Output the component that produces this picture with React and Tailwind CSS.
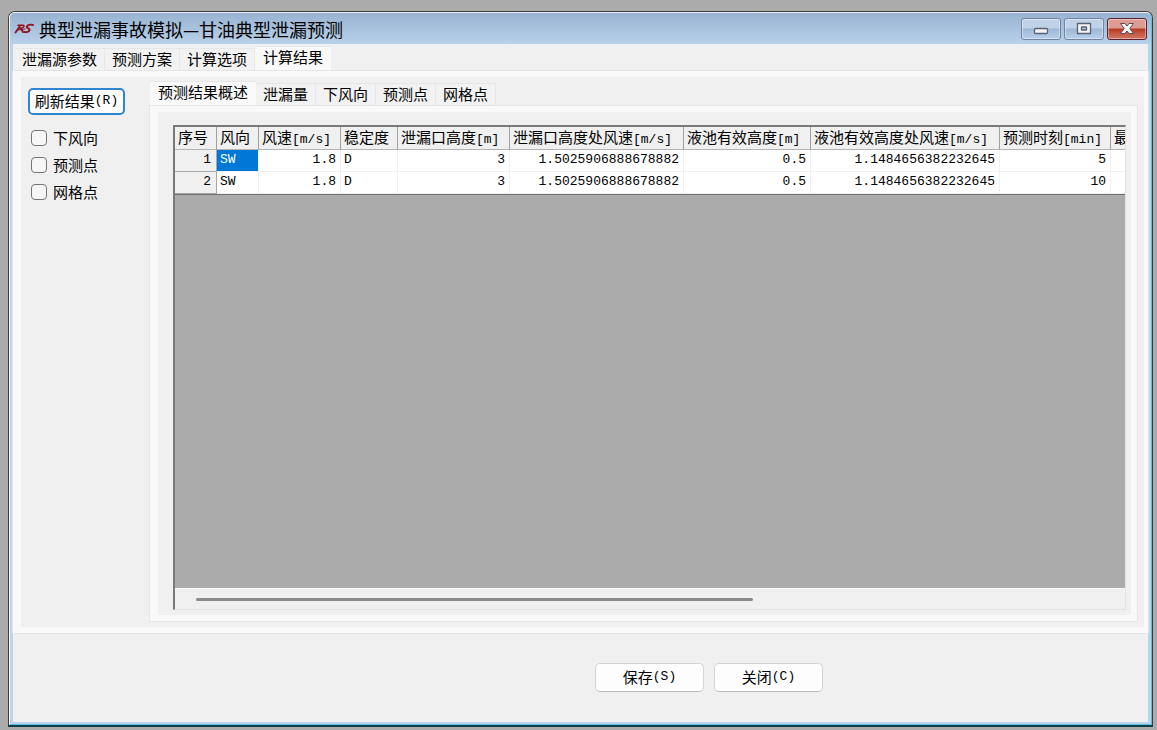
import React, { useState } from 'react';

const MAIN_TABS = ['泄漏源参数', '预测方案', '计算选项', '计算结果'];
const RESULT_TABS = ['预测结果概述', '泄漏量', '下风向', '预测点', '网格点'];
const FILTERS = ['下风向', '预测点', '网格点'];

const COLUMNS = [
    { label: '序号', width: 'w-[42px]' },
    { label: '风向', width: 'w-[42px]' },
    { label: '风速', unit: '[m/s]', width: 'w-[82px]', numeric: true },
    { label: '稳定度', width: 'w-[57px]' },
    { label: '泄漏口高度', unit: '[m]', width: 'w-[112px]', numeric: true },
    { label: '泄漏口高度处风速', unit: '[m/s]', width: 'w-[174px]', numeric: true },
    { label: '液池有效高度', unit: '[m]', width: 'w-[127px]', numeric: true },
    { label: '液池有效高度处风速', unit: '[m/s]', width: 'w-[189px]', numeric: true },
    { label: '预测时刻', unit: '[min]', width: 'w-[111px]', numeric: true },
    { label: '最', width: 'w-[120px]', numeric: true },
];

const ROWS = [
    ['1', 'SW', '1.8', 'D', '3', '1.5025906888678882', '0.5', '1.1484656382232645', '5', ''],
    ['2', 'SW', '1.8', 'D', '3', '1.5025906888678882', '0.5', '1.1484656382232645', '10', ''],
];

const Mono = ({ children }) => (
    <span className="font-['Liberation_Mono',monospace] text-[13px] leading-none">{children}</span>
);

const Logo = () => (
    <svg className="w-5 h-4 shrink-0" viewBox="0 0 20 16" fill="none" stroke="#8f1420" strokeLinecap="round" aria-hidden="true">
        <path d="M4 4.2H9C11 4.4 9.8 7 7 7.4H5" strokeWidth="1.5" />
        <path d="M6 5L1.5 11.5M7 7.5L9 11" strokeWidth="1.9" />
        <path d="M19 4C16.5 3.2 13.2 4 12.8 5.8C12.6 7.4 16 7.4 15.6 9C15.2 10.8 12.5 11.4 10.3 11" strokeWidth="1.9" />
        <path d="M4 9L11 8" strokeWidth="1" />
    </svg>
);

const CaptionButton = ({ label, danger, children }) => (
    <button
        type="button"
        aria-label={label}
        className={`w-10 h-[22px] flex items-center justify-center rounded-[3px] border shadow-[inset_0_0_0_1px_rgba(255,255,255,0.4)] ${
            danger
                ? 'border-[#5a2030] bg-linear-to-b from-[#dc9c90] from-45% via-[#b93a22] via-50% to-[#d07860]'
                : 'border-[#72839f] bg-linear-to-b from-[#bfd2e8] from-45% via-[#9db8d6] via-50% to-[#b7d0ea]'
        }`}
    >
        {children}
    </button>
);

const TitleBar = () => (
    <header className="h-[31px] flex items-center pl-1 pr-1 rounded-t-[5px] bg-linear-to-b from-[#98b3d1] to-[#b9d1ea]">
        <Logo />
        <h1 className="flex-1 pl-[5px] text-[18px] leading-5 whitespace-nowrap">典型泄漏事故模拟—甘油典型泄漏预测</h1>
        <div className="flex gap-[3px]">
            <CaptionButton label="最小化">
                <svg className="w-4 h-4" viewBox="0 0 16 16">
                    <rect x="1.5" y="7.5" width="13" height="5" rx="1" fill="#f4f4f4" stroke="#596273" strokeWidth="1.3" />
                </svg>
            </CaptionButton>
            <CaptionButton label="最大化">
                <svg className="w-4 h-4" viewBox="0 0 16 16">
                    <path
                        fillRule="evenodd"
                        d="M1.5 2.5h13v10h-13zM5.5 6v3h5V6z"
                        fill="#f4f4f4"
                        stroke="#596273"
                        strokeWidth="1.3"
                        strokeLinejoin="round"
                    />
                </svg>
            </CaptionButton>
            <CaptionButton label="关闭窗口" danger>
                <svg className="w-4 h-4" viewBox="0 0 16 16">
                    <path
                        d="M1.5 2.5H6L8 5L10 2.5H14.5L10.8 7.5L14.5 12.5H10L8 10L6 12.5H1.5L5.2 7.5Z"
                        fill="#f4f4f4"
                        stroke="#5e4b57"
                        strokeLinejoin="round"
                    />
                </svg>
            </CaptionButton>
        </div>
    </header>
);

const Tabs = ({ items, active, onChange, label, firstPadding }) => (
    <div role="tablist" aria-label={label} className="flex items-end h-[25px]">
        {items.map((item, index) => {
            const selected = index === active;
            return (
                <button
                    key={item}
                    type="button"
                    role="tab"
                    aria-selected={selected}
                    onClick={() => onChange(index)}
                    className={`text-[15px] leading-5 whitespace-nowrap border-[#e6e6e6] ${
                        selected
                            ? 'h-[25px] pb-1 px-2 bg-[#f9f9f9] border-t'
                            : `h-[23px] pb-[2px] border-t border-r bg-[#f2f2f2] ${index === 0 ? firstPadding : 'px-[7px]'}`
                    }`}
                >
                    {item}
                </button>
            );
        })}
    </div>
);

const ResultGrid = () => (
    <div className="flex-1 flex flex-col min-w-0 overflow-hidden bg-[#ababab] border-t-2 border-l-2 border-[#7a7a7a] border-r border-b border-r-[#e2e2e2] border-b-[#e2e2e2]">
        <div className="flex-1 overflow-hidden">
            <table className="table-fixed w-[1056px] border-separate border-spacing-0 border-b border-[#6f6f6f]">
                <thead>
                    <tr className="h-[23px] bg-[#f0f0f0]">
                        {COLUMNS.map((col) => (
                            <th
                                key={col.label}
                                scope="col"
                                className={`${col.width} p-0 pl-[3px] align-top text-left font-normal text-[15px] leading-5 whitespace-nowrap border-r border-b border-r-[#a0a0a0] border-b-[#b4b4b4]`}
                            >
                                {col.label}
                                {col.unit && <Mono>{col.unit}</Mono>}
                            </th>
                        ))}
                    </tr>
                </thead>
                <tbody className="font-['Liberation_Mono',monospace] text-[13px] leading-5">
                    {ROWS.map((row, rowIndex) => (
                        <tr key={row[0]} className="h-[22px] bg-white">
                            {row.map((value, i) => {
                                if (i === 0) {
                                    return (
                                        <th key={i} scope="row" className="p-0 pr-[5px] text-right font-normal align-top bg-[#f0f0f0] border-r border-b border-[#a8a8a8]">
                                            {value}
                                        </th>
                                    );
                                }
                                const picked = rowIndex === 0 && i === 1;
                                return (
                                    <td
                                        key={i}
                                        className={`p-0 px-[3px] align-top border-r border-b border-[#f0f0f0] ${
                                            COLUMNS[i].numeric ? 'text-right pr-1' : 'text-left'
                                        } ${picked ? 'bg-[#0078d7] text-white' : ''}`}
                                    >
                                        {value}
                                    </td>
                                );
                            })}
                        </tr>
                    ))}
                </tbody>
            </table>
        </div>
        <div className="h-[21px] flex items-center pl-[21px] bg-[#f0f0f0] border-t border-[#fafafa]">
            <div className="w-[60%] h-[3px] rounded-full bg-[#8a8a8a]" />
        </div>
    </div>
);

const Sidebar = () => (
    <aside className="w-[129px] shrink-0 pt-[11px] pl-[7px]">
        <button
            type="button"
            className="w-[97px] h-[27px] flex items-center justify-center pb-[2px] rounded-[5px] border-2 border-[#2f86cf] bg-[#fdfdfd] text-[15px] leading-5 whitespace-nowrap"
        >
            刷新结果<Mono>(R)</Mono>
        </button>
        <div className="flex flex-col gap-[7px] pt-[13px] pl-[3px]">
            {FILTERS.map((name) => (
                <label key={name} className="flex items-center gap-[6px] h-5 text-[15px] leading-5">
                    <input type="checkbox" className="appearance-none w-4 h-4 rounded-[4px] border border-[#757575] bg-[#f6f6f6] checked:bg-[#0078d7]" />
                    {name}
                </label>
            ))}
        </div>
    </aside>
);

const FooterButton = ({ text, hotkey }) => (
    <button
        type="button"
        className="w-[109px] h-[29px] flex items-center justify-center pb-[2px] rounded-[5px] border border-[#d4d4d4] border-b-[#bcbcbc] bg-[#fdfdfd] text-[15px] leading-5"
    >
        {text}
        <Mono>({hotkey})</Mono>
    </button>
);

export default function App() {
    const [mainTab, setMainTab] = useState(3);
    const [resultTab, setResultTab] = useState(0);

    return (
        <div className="min-h-screen flex pt-[11px] pl-2 pr-1 pb-[3px] bg-[#ababab] text-black font-['Noto_Sans_CJK_SC',sans-serif]">
            <div className="flex-1 min-w-0 flex flex-col rounded-t-[7px] border border-[#3c3c3c] border-b-2 border-b-[#123c46] bg-[#bcd3ea]">
                <div className="flex-1 flex flex-col min-w-0 rounded-t-[6px] border border-t-[#e8f1fa] border-l-white border-r-[#4fc3e0] border-b-[#4fc3e0]">
                    <TitleBar />
                    <main className="flex-1 flex flex-col min-w-0 mx-[3px] mb-[2px] bg-[#f0f0f0]">
                        <div className="pl-[2px] pt-[2px]">
                            <Tabs
                                items={MAIN_TABS}
                                active={mainTab}
                                onChange={setMainTab}
                                label="模拟步骤"
                                firstPadding="px-[7px]"
                            />
                        </div>
                        <section className="flex-1 flex min-w-0 border-[#f9f9f9] border-t-[6px] border-l-8 border-r-4 border-b-[6px] outline outline-[#e6e6e6]">
                            <Sidebar />
                            <div className="flex-1 min-w-0 flex flex-col pt-1 pr-[7px] pb-[6px]">
                                <Tabs
                                    items={RESULT_TABS}
                                    active={resultTab}
                                    onChange={setResultTab}
                                    label="计算结果"
                                    firstPadding="px-2"
                                />
                                <div className="flex-1 min-w-0 flex pt-[13px] pl-[15px] pr-[5px] pb-[5px] border-t-[6px] border-l-8 border-r-[6px] border-b-[6px] border-[#f9f9f9] outline outline-[#e6e6e6]">
                                    <ResultGrid />
                                </div>
                            </div>
                        </section>
                        <footer className="h-[89px] flex justify-center gap-[10px] pt-[30px] pl-[257px]">
                            <FooterButton text="保存" hotkey="S" />
                            <FooterButton text="关闭" hotkey="C" />
                        </footer>
                    </main>
                </div>
            </div>
        </div>
    );
}
